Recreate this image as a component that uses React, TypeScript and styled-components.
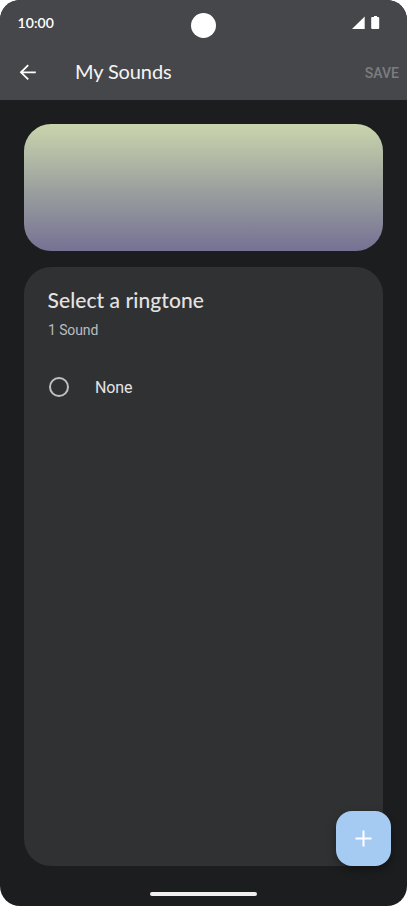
import React from "react";
import styled, { createGlobalStyle } from "styled-components";

const GlobalStyle = createGlobalStyle`
  * { box-sizing: border-box; }
  body { margin: 0; background: #fff; }
`;

const Screen = styled.main`
  position: relative;
  display: flex;
  flex-direction: column;
  width: 407px;
  height: 906px;
  overflow: hidden;
  border-radius: 20px;
  background: #1c1d1f;
  color: #e3e3e4;
  font-family: Roboto, sans-serif;
`;

const Header = styled.header`
  height: 100px;
  background: #46474a;
`;

const StatusBar = styled.div`
  display: flex;
  align-items: center;
  justify-content: space-between;
  height: 45px;
  padding: 0 27px 0 17.5px;
`;

const Clock = styled.time`
  color: #fff;
  font: 600 14px/20px Lato, sans-serif;
  letter-spacing: 0.1px;
`;

const StatusIcons = styled.svg`
  width: 28px;
  height: 14px;
  fill: #fff;
`;

const Camera = styled.div`
  position: absolute;
  top: 13px;
  left: 191px;
  width: 25px;
  height: 25px;
  border-radius: 50%;
  background: #fff;
`;

const Toolbar = styled.div`
  display: flex;
  align-items: center;
  height: 55px;
  padding: 0 8px 0 18px;
`;

const IconButton = styled.button`
  display: flex;
  width: 20px;
  height: 20px;
  padding: 0;
  border: 0;
  background: none;
`;

const Title = styled.h1`
  flex: 1;
  margin: 0 0 0 37px;
  padding-bottom: 3px;
  color: #f4f4f5;
  font: 400 20px/28px Lato, sans-serif;
  letter-spacing: -0.12px;
`;

const SaveButton = styled.button`
  padding: 0;
  border: 0;
  background: none;
  color: #7c7d80;
  font: 500 14px/20px Roboto, sans-serif;
`;

const Content = styled.div`
  display: flex;
  flex: 1;
  flex-direction: column;
  gap: 16px;
  padding: 24px 24px 40px;
`;

const Banner = styled.section`
  height: 126.5px;
  width: 359px;
  border-radius: 27px;
  background: linear-gradient(#c9d5ac, #9a9f9e 53%, #757194);
`;

const Panel = styled.section`
  flex: 1;
  width: 359px;
  padding: 19.5px 24px;
  border-radius: 27px;
  background: #303133;
`;

const Heading = styled.h2`
  margin: 0 0 0 -0.5px;
  font: 500 21px/28px Lato, sans-serif;
  letter-spacing: 0.07px;
`;

const Count = styled.p`
  margin: 6px 0 0;
  color: #bbbcc1;
  font-size: 14px;
  line-height: 20px;
  letter-spacing: -0.1px;
`;

const Option = styled.label`
  display: flex;
  align-items: center;
  gap: 26px;
  height: 48px;
  margin-top: 22.5px;
  padding-left: 1px;
  font-size: 16px;
  letter-spacing: -0.1px;
`;

const Radio = styled.input`
  width: 20px;
  height: 20px;
  margin: 0;
  appearance: none;
  border: 2px solid #bfc0c5;
  border-radius: 50%;
`;

const OptionText = styled.span`
  padding-top: 2px;
`;

const AddButton = styled.button`
  position: absolute;
  top: 811px;
  left: 336px;
  display: flex;
  align-items: center;
  justify-content: center;
  width: 55px;
  height: 55px;
  padding: 0;
  border: 0;
  border-radius: 16px;
  background: #a6cbf3;
  box-shadow: 0 4px 8px rgba(0, 0, 0, 0.35);
`;

const HomeIndicator = styled.div`
  position: absolute;
  top: 892px;
  left: 150px;
  width: 107px;
  height: 4px;
  border-radius: 2px;
  background: #f0eeee;
`;

export default function App() {
  return (
    <>
      <GlobalStyle />
      <Screen>
        <Header>
          <StatusBar>
            <Clock>10:00</Clock>
            <StatusIcons viewBox="0 0 28 14">
              <path d="M0 13 L12.7 0.5 V13 Z" />
              <path d="M20 1 h2 v-1 h3 v1 h1.2 q1 0 1 1 v10 q0 1-1 1 h-6 q-1 0-1-1 v-10 q0-1 0.8-1 Z" />
            </StatusIcons>
          </StatusBar>
          <Toolbar>
            <IconButton aria-label="Back">
              <svg width="20" height="20" fill="none" stroke="#fff" strokeWidth="1.8">
                <path d="M17.8 9.3 H3 M10.2 2.2 L3 9.3 L10.2 16.4" />
              </svg>
            </IconButton>
            <Title>My Sounds</Title>
            <SaveButton disabled>SAVE</SaveButton>
          </Toolbar>
        </Header>
        <Camera />
        <Content>
          <Banner />
          <Panel>
            <Heading>Select a ringtone</Heading>
            <Count>1 Sound</Count>
            <Option>
              <Radio type="radio" name="ringtone" />
              <OptionText>None</OptionText>
            </Option>
          </Panel>
        </Content>
        <AddButton aria-label="Add ringtone">
          <svg width="17" height="17" fill="none" stroke="#fff" strokeWidth="2">
            <path d="M8.5 0.5 V16.5 M0.5 8.5 H16.5" />
          </svg>
        </AddButton>
        <HomeIndicator />
      </Screen>
    </>
  );
}
